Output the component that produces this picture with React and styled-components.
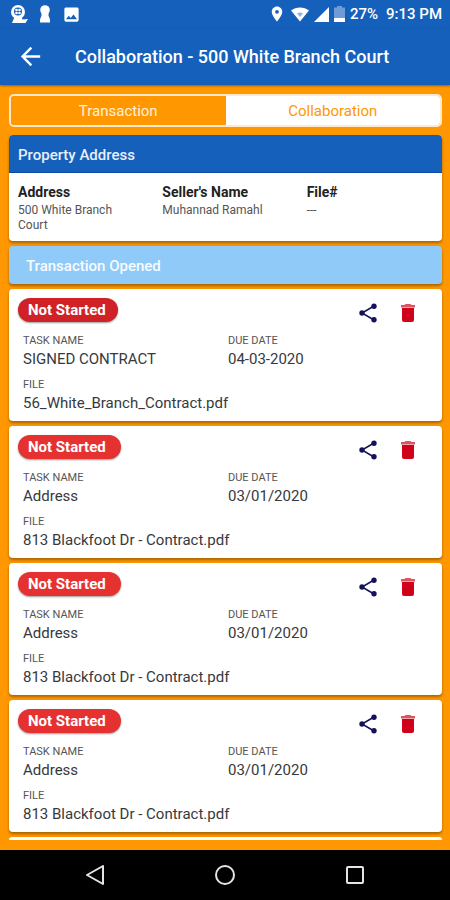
import styled, { createGlobalStyle } from "styled-components";
import { MdArrowBack, MdImage, MdLocationOn } from "react-icons/md";

const GlobalStyle = createGlobalStyle`
  * {
    box-sizing: border-box;
  }
  body {
    margin: 0;
    font-family: Roboto, "Liberation Sans", sans-serif;
    background: #ff9800;
  }
  button {
    font-family: inherit;
    cursor: pointer;
  }
`;

const Screen = styled.div`
  display: flex;
  flex-direction: column;
  min-height: 100vh;
  background: #ff9800;
`;

const StatusBar = styled.div`
  display: flex;
  align-items: center;
  justify-content: space-between;
  height: 28px;
  padding: 0 8px 0 10px;
  color: white;
  background: #1560ba;
`;

const StatusGroup = styled.div`
  display: flex;
  align-items: center;
  gap: ${(props) => props.$gap};
  font-size: 15px;
  font-weight: 500;
`;

const Clock = styled.span`
  margin-left: 3px;
`;

const AppBar = styled.header`
  display: flex;
  align-items: center;
  gap: 30px;
  height: 57px;
  padding: 0 15px;
  color: white;
  background: #1560ba;
  box-shadow: 0 1px 2px rgba(0, 0, 0, 0.4);
`;

const BackButton = styled.button`
  display: flex;
  align-items: center;
  justify-content: center;
  width: 30px;
  height: 30px;
  padding: 0;
  border: none;
  color: white;
  background: none;
`;

const Title = styled.h1`
  margin: 0;
  font-size: 18px;
  font-weight: 500;
  line-height: 24px;
`;

const Content = styled.main`
  flex: 1;
  display: flex;
  flex-direction: column;
  padding: 9px 8px 10px 9px;
`;

const Tabs = styled.div`
  display: flex;
  height: 33px;
  margin-bottom: 8px;
  overflow: hidden;
  border: 2px solid #ffe9cc;
  border-radius: 5px;
`;

const Tab = styled.button`
  flex: 1;
  padding: 0;
  border: none;
  font-size: 15px;
  color: ${(props) => (props.$active ? "#fff1de" : "#ff9800")};
  background: ${(props) => (props.$active ? "#ff9800" : "white")};
`;

const List = styled.div`
  flex: 1;
  display: flex;
  flex-direction: column;
  gap: 5px;
`;

const Card = styled.section`
  border-radius: 4px;
  background: white;
  box-shadow: 0 2px 3px rgba(0, 0, 0, 0.35);
`;

const CardTitle = styled.h2`
  margin: 0;
  padding: 10px 9px 7px;
  border-bottom: 1px solid #0b4aa6;
  border-radius: 4px 4px 0 0;
  font-size: 15px;
  font-weight: 500;
  line-height: 20px;
  color: #e8effa;
  background: #1560ba;
`;

const PropertyGrid = styled.dl`
  display: grid;
  grid-template-columns: repeat(3, 1fr);
  margin: 0;
  padding: 9px 0 8px;
`;

const PropertyItem = styled.div`
  padding: 0 30px 0 9px;
`;

const PropertyName = styled.dt`
  font-size: 14px;
  font-weight: 700;
  line-height: 20px;
  white-space: nowrap;
  color: #222;
`;

const PropertyValue = styled.dd`
  margin: 1px 0 0;
  font-size: 12px;
  line-height: 15px;
  color: #555;
`;

const Banner = styled.h2`
  margin: 0;
  padding: 10px 17px 8px;
  border-radius: 4px;
  font-size: 15px;
  font-weight: 500;
  line-height: 20px;
  color: #f8fbff;
  background: #90caf8;
  box-shadow: 0 2px 3px rgba(0, 0, 0, 0.35);
`;

const TaskCard = styled(Card)`
  padding: 9px 9px 8px;
`;

const CardEdge = styled.div`
  flex: 1;
  min-height: 3px;
  border-radius: 4px 4px 0 0;
  background: white;
`;

const TaskHead = styled.div`
  display: flex;
  align-items: flex-start;
  justify-content: space-between;
  height: 36px;
`;

const Badge = styled.span`
  padding: 0 ${(props) => (props.$wide ? "15px" : "12px")} 0 10px;
  border-radius: 12px;
  font-size: 15px;
  font-weight: 700;
  line-height: 24px;
  color: white;
  background: ${(props) => (props.$wide ? "#e53231" : "#d02226")};
  box-shadow: 0 1px 2px rgba(0, 0, 0, 0.4);
`;

const Actions = styled.div`
  display: flex;
  gap: 16px;
  padding: 3px 13px 0 0;
`;

const IconButton = styled.button`
  display: flex;
  align-items: center;
  justify-content: center;
  width: 24px;
  height: 24px;
  padding: 0;
  border: none;
  background: none;
`;

const Fields = styled.dl`
  display: grid;
  grid-template-columns: 1fr 1fr;
  row-gap: 9px;
  margin: 0;
  padding-left: 5px;
`;

const Field = styled.div`
  grid-column: ${(props) => (props.$full ? "1 / -1" : "auto")};
`;

const FieldLabel = styled.dt`
  font-size: 11px;
  line-height: 14px;
  text-transform: uppercase;
  color: #555;
`;

const FieldValue = styled.dd`
  margin: 1px 0 0;
  font-size: 15px;
  line-height: 20px;
  color: #37393d;
`;

const NavBar = styled.nav`
  display: grid;
  grid-template-columns: repeat(3, 130px);
  justify-content: center;
  align-items: center;
  height: 50px;
  background: black;
`;

const NavButton = styled.button`
  display: flex;
  justify-content: center;
  padding: 0;
  border: none;
  background: none;
`;

const property = [
  { name: "Address", value: "500 White Branch Court" },
  { name: "Seller's Name", value: "Muhannad Ramahl" },
  { name: "File#", value: "---" },
];

const blackfoot = {
  name: "Address",
  due: "03/01/2020",
  file: "813 Blackfoot Dr - Contract.pdf",
  wide: true,
};

const tasks = [
  {
    id: 1,
    name: "SIGNED CONTRACT",
    due: "04-03-2020",
    file: "56_White_Branch_Contract.pdf",
  },
  { id: 2, ...blackfoot },
  { id: 3, ...blackfoot },
  { id: 4, ...blackfoot },
];

const WebcamIcon = () => (
  <svg width="18" height="20" viewBox="0 0 18 20">
    <circle cx="8" cy="8" r="7" fill="white" />
    <circle cx="8" cy="7.500" r="4" fill="#1560ba" />
    <circle cx="6.500" cy="6" r="1.300" fill="white" />
    <circle cx="9.500" cy="6" r="1.300" fill="white" />
    <circle cx="6.500" cy="9" r="1.300" fill="white" />
    <circle cx="9.500" cy="9" r="1.300" fill="white" />
    <path d="M4.500 13h7l1 2.500 5.500-.5-2.500 4H2l1-2.500z" fill="white" />
  </svg>
);

const KeyholeIcon = () => (
  <svg width="12" height="18" viewBox="0 0 12 18" fill="white">
    <circle cx="6" cy="5" r="4.800" />
    <path d="M2.500 6h7v4.500l1.500 4v3H1v-3l1.500-4z" />
  </svg>
);

const WifiIcon = () => (
  <svg width="18" height="15" viewBox="0 0 18 15">
    <path d="M0 3.500C5-.5 13-.5 18 3.500L9 14.500z" fill="white" />
    <path d="M6 6.500c2-1.300 4-1.300 6 0L9 10z" fill="#8fb4e0" />
  </svg>
);

const SignalIcon = () => (
  <svg width="15" height="15" viewBox="0 0 15 15">
    <path d="M15 0v15H0z" fill="white" />
  </svg>
);

const BatteryIcon = () => (
  <svg width="11" height="16" viewBox="0 0 11 16">
    <path d="M3 0h5v1.500h3V12H0V1.500h3z" fill="#6f9cd6" />
    <path d="M0 12h11v4H0z" fill="white" />
  </svg>
);

const ShareIcon = () => (
  <svg width="20" height="20" viewBox="0 0 20 20" fill="#15125c">
    <path d="M16 3 4 10l12 7" fill="none" stroke="#15125c" strokeWidth="1.500" />
    <circle cx="16" cy="3.200" r="2.700" />
    <circle cx="4" cy="10" r="2.700" />
    <circle cx="16" cy="16.800" r="2.700" />
  </svg>
);

const TrashIcon = () => (
  <svg width="14" height="18" viewBox="0 0 14 18">
    <path d="M4.500 0h5l1 1H14v2.500H0V1h3.500z" fill="#dd5560" />
    <path d="M1 4h12v12a2 2 0 0 1-2 2H3a2 2 0 0 1-2-2z" fill="#d0021b" />
  </svg>
);

const Task = ({ task }) => {
  return (
    <TaskCard>
      <TaskHead>
        <Badge $wide={task.wide}>Not Started</Badge>
        <Actions>
          <IconButton aria-label="Share">
            <ShareIcon />
          </IconButton>
          <IconButton aria-label="Delete">
            <TrashIcon />
          </IconButton>
        </Actions>
      </TaskHead>
      <Fields>
        <Field>
          <FieldLabel>Task Name</FieldLabel>
          <FieldValue>{task.name}</FieldValue>
        </Field>
        <Field>
          <FieldLabel>Due Date</FieldLabel>
          <FieldValue>{task.due}</FieldValue>
        </Field>
        <Field $full>
          <FieldLabel>File</FieldLabel>
          <FieldValue>{task.file}</FieldValue>
        </Field>
      </Fields>
    </TaskCard>
  );
};

const App = () => {
  return (
    <>
      <GlobalStyle />
      <Screen>
        <StatusBar>
          <StatusGroup $gap="11px">
            <WebcamIcon />
            <KeyholeIcon />
            <MdImage size={19} />
          </StatusGroup>
          <StatusGroup $gap="5px">
            <MdLocationOn size={18} />
            <WifiIcon />
            <SignalIcon />
            <BatteryIcon />
            <span>27%</span>
            <Clock>9:13 PM</Clock>
          </StatusGroup>
        </StatusBar>
        <AppBar>
          <BackButton aria-label="Back">
            <MdArrowBack size={29} />
          </BackButton>
          <Title>Collaboration - 500 White Branch Court</Title>
        </AppBar>
        <Content>
          <Tabs>
            <Tab $active>Transaction</Tab>
            <Tab>Collaboration</Tab>
          </Tabs>
          <List>
            <Card>
              <CardTitle>Property Address</CardTitle>
              <PropertyGrid>
                {property.map((item) => (
                  <PropertyItem key={item.name}>
                    <PropertyName>{item.name}</PropertyName>
                    <PropertyValue>{item.value}</PropertyValue>
                  </PropertyItem>
                ))}
              </PropertyGrid>
            </Card>
            <Banner>Transaction Opened</Banner>
            {tasks.map((task) => (
              <Task key={task.id} task={task} />
            ))}
            <CardEdge />
          </List>
        </Content>
        <NavBar>
          <NavButton aria-label="Back">
            <svg width="20" height="20" viewBox="0 0 20 20" fill="none">
              <path d="M18 1v18L2 10z" stroke="#e4e4e4" strokeWidth="2" strokeLinejoin="round" />
            </svg>
          </NavButton>
          <NavButton aria-label="Home">
            <svg width="20" height="20" viewBox="0 0 20 20" fill="none">
              <circle cx="10" cy="10" r="9" stroke="#e4e4e4" strokeWidth="2" />
            </svg>
          </NavButton>
          <NavButton aria-label="Recent apps">
            <svg width="20" height="20" viewBox="0 0 20 20" fill="none">
              <rect x="2" y="2" width="16" height="16" rx="1" stroke="#e4e4e4" strokeWidth="2" />
            </svg>
          </NavButton>
        </NavBar>
      </Screen>
    </>
  );
};

export default App;
